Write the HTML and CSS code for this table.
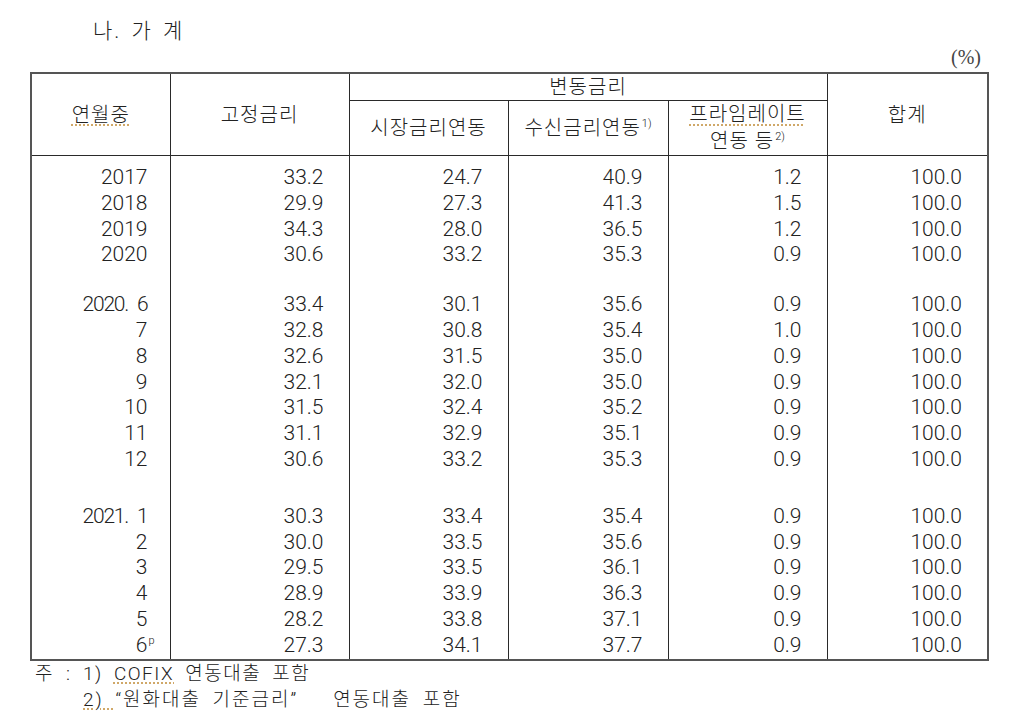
FILE: index.html
```html
<!DOCTYPE html>
<html lang="ko">
<head>
<meta charset="utf-8">
<title>나. 가계</title>
<link rel="stylesheet" href="styles.css">
</head>
<body>
<div class="page">
  <div class="title">나. 가 계</div>
  <div class="unit">(%)</div>
  <table class="rates">
    <colgroup>
      <col class="c1"><col class="c2"><col class="c3"><col class="c4"><col class="c5"><col class="c6">
    </colgroup>
    <thead>
      <tr class="h1">
        <th rowspan="2"><span class="squiggle">연월중</span></th>
        <th rowspan="2">고정금리</th>
        <th colspan="3">변동금리</th>
        <th rowspan="2">합계</th>
      </tr>
      <tr class="h2">
        <th>시장금리연동</th>
        <th>수신금리연동<sup>1)</sup></th>
        <th class="two"><span class="squiggle">프라임레이트</span><br>연동 등<sup>2)</sup></th>
      </tr>
    </thead>
    <tbody>
      <tr class="gap top"><td></td><td></td><td></td><td></td><td></td><td></td></tr>
      <tr><td>2017</td><td>33.2</td><td>24.7</td><td>40.9</td><td>1.2</td><td>100.0</td></tr>
      <tr><td>2018</td><td>29.9</td><td>27.3</td><td>41.3</td><td>1.5</td><td>100.0</td></tr>
      <tr><td>2019</td><td>34.3</td><td>28.0</td><td>36.5</td><td>1.2</td><td>100.0</td></tr>
      <tr><td>2020</td><td>30.6</td><td>33.2</td><td>35.3</td><td>0.9</td><td>100.0</td></tr>
      <tr class="gap g1"><td></td><td></td><td></td><td></td><td></td><td></td></tr>
      <tr><td class="ym">2020. 6</td><td>33.4</td><td>30.1</td><td>35.6</td><td>0.9</td><td>100.0</td></tr>
      <tr><td>7</td><td>32.8</td><td>30.8</td><td>35.4</td><td>1.0</td><td>100.0</td></tr>
      <tr><td>8</td><td>32.6</td><td>31.5</td><td>35.0</td><td>0.9</td><td>100.0</td></tr>
      <tr><td>9</td><td>32.1</td><td>32.0</td><td>35.0</td><td>0.9</td><td>100.0</td></tr>
      <tr><td>10</td><td>31.5</td><td>32.4</td><td>35.2</td><td>0.9</td><td>100.0</td></tr>
      <tr><td>11</td><td>31.1</td><td>32.9</td><td>35.1</td><td>0.9</td><td>100.0</td></tr>
      <tr><td>12</td><td>30.6</td><td>33.2</td><td>35.3</td><td>0.9</td><td>100.0</td></tr>
      <tr class="gap g2"><td></td><td></td><td></td><td></td><td></td><td></td></tr>
      <tr><td class="ym">2021. 1</td><td>30.3</td><td>33.4</td><td>35.4</td><td>0.9</td><td>100.0</td></tr>
      <tr><td>2</td><td>30.0</td><td>33.5</td><td>35.6</td><td>0.9</td><td>100.0</td></tr>
      <tr><td>3</td><td>29.5</td><td>33.5</td><td>36.1</td><td>0.9</td><td>100.0</td></tr>
      <tr><td>4</td><td>28.9</td><td>33.9</td><td>36.3</td><td>0.9</td><td>100.0</td></tr>
      <tr><td>5</td><td>28.2</td><td>33.8</td><td>37.1</td><td>0.9</td><td>100.0</td></tr>
      <tr><td>6<sup class="p">p</sup></td><td>27.3</td><td>34.1</td><td>37.7</td><td>0.9</td><td>100.0</td></tr>
    </tbody>
  </table>
  <div class="notes">
    <div class="note first"><span class="lead">주 :</span><span>1) <span class="squiggle">COFIX</span> 연동대출 포함</span></div>
    <div class="note second"><span class="lead"></span><span><span class="squiggle">2) </span>“원화대출 기준금리”   연동대출 포함</span></div>
  </div>
</div>
</body>
</html>
```

FILE: styles.css
```css
html, body {
  margin: 0;
  padding: 0;
  background: #ffffff;
}

body {
  font-family: "Roboto", "Noto Sans CJK KR", sans-serif;
  font-weight: 300;
  color: #222222;
}

.page {
  display: flex;
  flex-direction: column;
  width: 957px;
  padding: 17px 0 0 30px;
}

.title {
  margin-left: 63px;
  font-size: 21px;
  line-height: 28px;
  letter-spacing: 2px;
  word-spacing: 3px;
}

.unit {
  margin-bottom: 2px;
  padding-right: 6px;
  text-align: right;
  font-family: "Liberation Serif", serif;
  font-weight: 400;
  font-size: 20px;
  line-height: 25px;
  color: #444444;
}

.rates {
  width: 957px;
  table-layout: fixed;
  border-collapse: collapse;
  border: 2px solid #555555;
}

.c1 { width: 139px; }
.c2 { width: 179px; }
.c3 { width: 159px; }
.c4 { width: 160px; }
.c5 { width: 159px; }
.c6 { width: 161px; }

.rates th {
  border: 1px solid #2a2a2a;
  font-weight: 300;
  font-size: 20px;
  letter-spacing: 1px;
  padding: 0;
  text-align: center;
  vertical-align: middle;
}

.rates .h1 th { height: 26px; line-height: 26px; }
.rates .h2 th { height: 53px; line-height: 27px; }

.rates sup {
  font-size: 11px;
  line-height: 0;
  vertical-align: 8px;
  letter-spacing: 0;
  margin-left: 1px;
}

.rates td {
  border-left: 1px solid #2a2a2a;
  border-right: 1px solid #2a2a2a;
  padding: 0 25px 0 0;
  text-align: right;
  font-size: 21px;
  height: 25.8px;
  line-height: 25.8px;
  white-space: nowrap;
}

.rates td:first-child { padding-right: 22px; }
.rates td.ym { word-spacing: 5px; letter-spacing: -1.2px; }

.rates .gap td { height: 0; line-height: 0; }
.rates .gap.top td { height: 9px; }
.rates .gap.g1 td { height: 24px; }
.rates .gap.g2 td { height: 31px; }

.rates sup.p {
  font-size: 11px;
  vertical-align: 8px;
  margin-left: 1px;
  margin-right: -7px;
}

.squiggle {
  text-decoration: underline dotted #d0a868;
  text-decoration-thickness: 2px;
  text-underline-offset: 3px;
}

.notes {
  display: flex;
  flex-direction: column;
  font-size: 19px;
  line-height: 26px;
  letter-spacing: 2px;
  word-spacing: 5px;
}

.note {
  display: flex;
  white-space: pre;
}

.note.first { letter-spacing: 1.5px; }
.note.second { padding-left: 3px; }

.note .lead {
  width: 48px;
  padding-left: 5px;
  word-spacing: 6px;
}

.note.second .lead { padding-left: 2px; }
```
